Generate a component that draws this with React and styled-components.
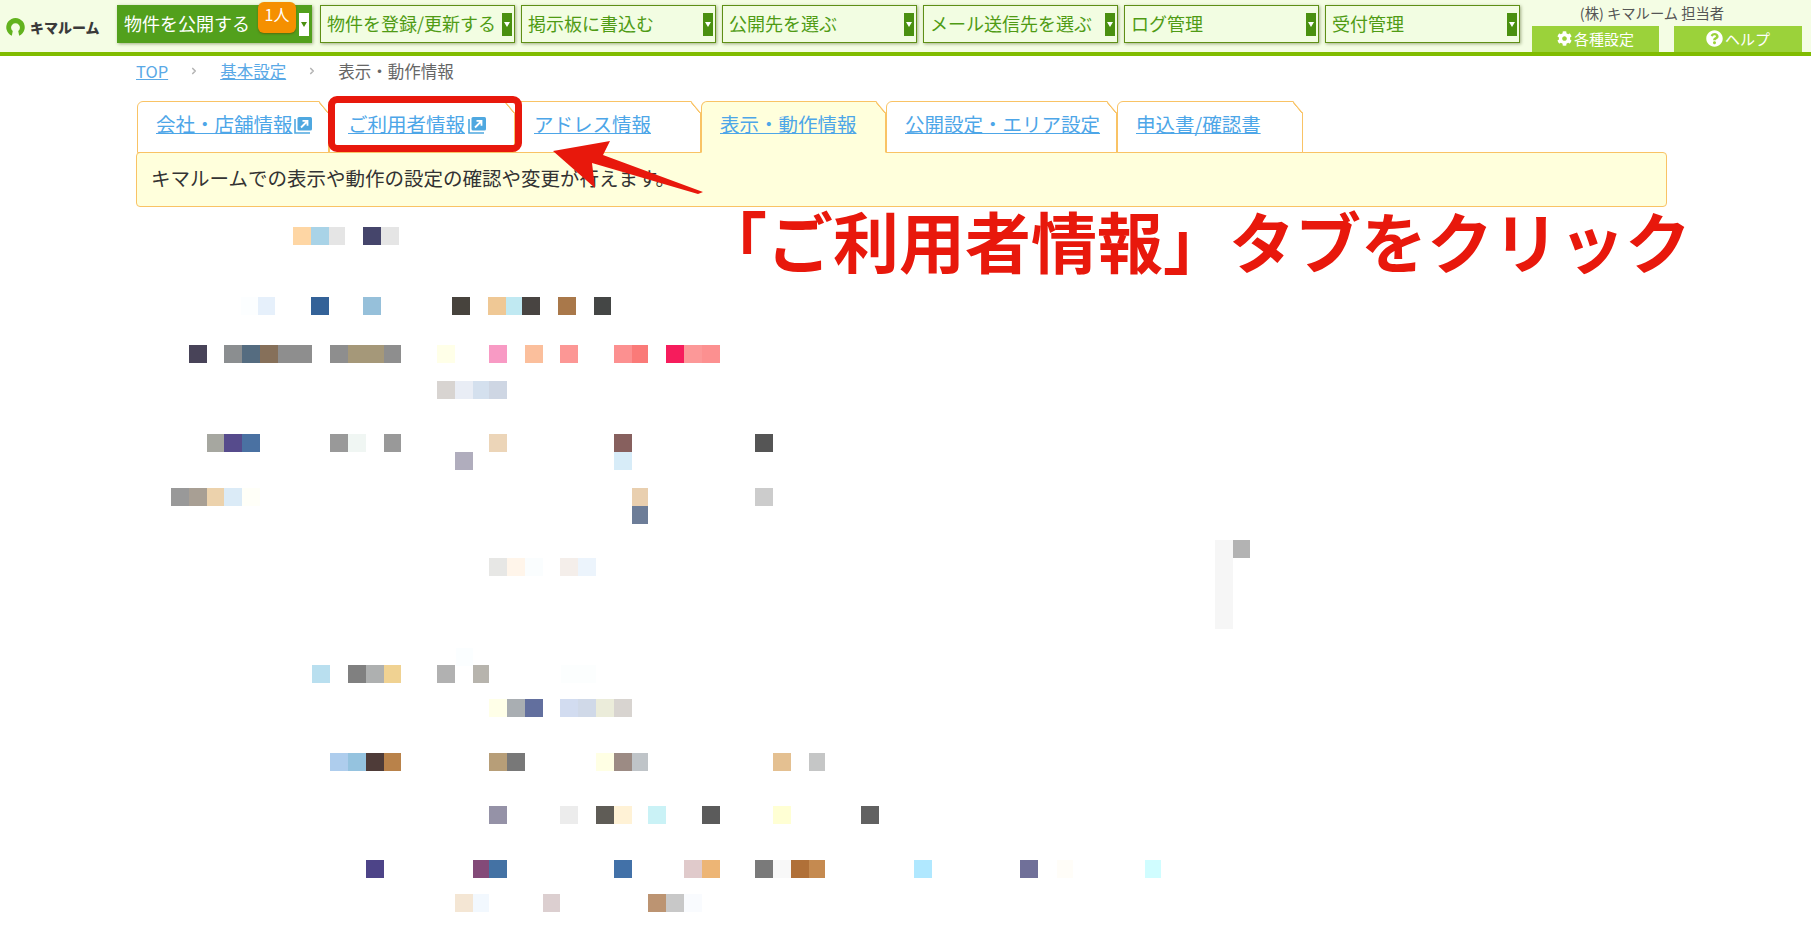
import styled, { createGlobalStyle } from 'styled-components';
import { ChevronRight } from 'lucide-react';
import { FaCog, FaQuestionCircle } from 'react-icons/fa';

const jp = `'Noto Sans CJK JP', 'Noto Sans', sans-serif`;
const red = '#e8180c';

const menus = ['物件を登録/更新する', '掲示板に書込む', '公開先を選ぶ', 'メール送信先を選ぶ', 'ログ管理', '受付管理'];

const tabs = [
  { label: '会社・店舗情報', width: 192, gap: 1, external: true },
  { label: 'ご利用者情報', width: 186, gap: 3, external: true },
  { label: 'アドレス情報', width: 186 },
  { label: '表示・動作情報', width: 185, active: true },
  { label: '公開設定・エリア設定', width: 231 },
  { label: '申込書/確認書', width: 186 },
];

// the blurred part of the page: [top, [left, right, colour], ...]
const mosaic = [
  [227, [293, 311, '#fed6a4'], [311, 329, '#a9d3e7'], [329, 345, '#e5e5e5'], [363, 381, '#45456b'], [381, 399, '#e5e5e5']],
  [297, [241, 258, '#fcfeff'], [258, 275, '#e6f0fb'], [311, 329, '#346298'], [363, 381, '#96c0da'], [452, 470, '#47433d'], [488, 506, '#efc895'], [506, 522, '#c0e9f2'], [522, 540, '#484441'], [558, 576, '#a9784a'], [594, 611, '#444645']],
  [345, [189, 207, '#484358'], [224, 242, '#8b8e90'], [242, 260, '#556c80'], [260, 278, '#86705a'], [278, 312, '#8e8e8e'], [330, 348, '#8e8e8e'], [348, 384, '#a59879'], [384, 401, '#8e8e8e'], [437, 455, '#ffffe8'], [489, 507, '#f89ac4'], [525, 543, '#fbbf9c'], [560, 578, '#fc9795'], [614, 632, '#fc9090'], [632, 648, '#fa7a78'], [666, 684, '#f61c5c'], [684, 702, '#fc9898'], [702, 720, '#fc9090']],
  [381, [437, 455, '#d8d4d1'], [455, 473, '#e9edf5'], [473, 489, '#d4e0ee'], [489, 507, '#ced6e3']],
  [434, [207, 224, '#a6a7a0'], [224, 242, '#564b8c'], [242, 260, '#4a71a2'], [330, 348, '#999999'], [348, 366, '#f0f6f3'], [384, 401, '#999999'], [489, 507, '#ecd5b8'], [614, 632, '#87605e'], [755, 773, '#555555']],
  [452, [455, 473, '#b0adbd'], [614, 632, '#d7ecf8']],
  [488, [171, 189, '#999999'], [189, 207, '#a89f94'], [207, 224, '#ecd2ac'], [224, 242, '#dbebf7'], [242, 260, '#fffff8'], [632, 648, '#e9cfaf'], [755, 773, '#cccccc']],
  [506, [632, 648, '#6d7d98']],
  [540, [1233, 1250, '#b3b3b3']],
  [558, [489, 507, '#e7e7e5'], [507, 525, '#fff5ea'], [525, 543, '#fafdfe'], [560, 578, '#f4eeea'], [578, 596, '#ecf4fc']],
  [648, [456, 473, '#fbfeff']],
  [665, [312, 330, '#b9dfef'], [348, 366, '#808080'], [366, 384, '#aeb0b0'], [384, 401, '#f0d292'], [437, 455, '#b1b1b1'], [473, 489, '#b7b4ad'], [561, 578, '#fcfefe'], [578, 596, '#fcfefe']],
  [699, [489, 507, '#ffffe8'], [507, 525, '#a9aeb2'], [525, 543, '#626f9e'], [560, 578, '#d2dcf0'], [578, 596, '#d0d9e8'], [596, 614, '#ebecda'], [614, 632, '#d8d4d0']],
  [753, [330, 348, '#aecded'], [348, 366, '#95c3df'], [366, 384, '#4e3b38'], [384, 401, '#b9824a'], [489, 507, '#b79e78'], [507, 525, '#787878'], [596, 614, '#ffffe4'], [614, 632, '#9c8b84'], [632, 648, '#bfc4c8'], [773, 791, '#e4c091'], [809, 825, '#c5c6c6']],
  [806, [489, 507, '#9592a7'], [560, 578, '#ececec'], [596, 614, '#5f5c56'], [614, 632, '#fff2d6'], [648, 666, '#caf2f6'], [702, 720, '#5b5b5b'], [773, 791, '#ffffd4'], [861, 879, '#616161']],
  [860, [366, 384, '#4d4488'], [473, 489, '#834a78'], [489, 507, '#4472a4'], [614, 632, '#4271a8'], [684, 702, '#e0cacb'], [702, 720, '#edb575'], [755, 773, '#7a7a7a'], [773, 791, '#f8f8f8'], [791, 809, '#b07038'], [809, 825, '#c58a50'], [914, 932, '#b0e8ff'], [1020, 1038, '#707099'], [1057, 1073, '#fffdf8'], [1145, 1161, '#d0fdff']],
  [894, [455, 473, '#f4e6d4'], [473, 489, '#f2f8fe'], [543, 560, '#dccfd0'], [648, 666, '#bc9472'], [666, 684, '#c8c8c8'], [684, 702, '#f9fbfe']],
];

const GlobalStyle = createGlobalStyle`
  html, body {
    margin: 0;
    height: 100%;
    overflow: hidden;
    background: #fff;
    font-family: ${jp};
  }
  * {
    box-sizing: border-box;
  }
`;

const Page = styled.div`
  position: relative;
  width: 1811px;
  height: 929px;
  overflow: hidden;
`;

const HeaderBar = styled.header`
  display: flex;
  height: 56px;
  background: #f4fde4;
  border-bottom: 4px solid #80bc00;
`;

const Logo = styled.div`
  display: flex;
  align-items: center;
  gap: 4px;
  width: 117px;
  padding: 1px 0 0 5px;
  flex-shrink: 0;
  font-size: 14px;
  font-weight: 900;
  color: #3a3a3a;
  white-space: nowrap;
`;

const MenuRow = styled.nav`
  display: flex;
  gap: 6px;
  padding-top: 5px;
`;

const MenuButton = styled.div`
  position: relative;
  display: flex;
  align-items: center;
  justify-content: space-between;
  width: 195px;
  height: 38px;
  margin-right: ${props => (props.$active ? '2px' : '0')};
  padding: 0 2px 2px 6px;
  font-size: 18px;
  color: ${props => (props.$active ? '#fff' : '#4f9b14')};
  background: ${props => (props.$active ? '#52a01c' : '#f2fde2')};
  border: 1px solid ${props => (props.$active ? '#52a01c' : '#5f8f16')};
  box-shadow: 1px 1px 3px rgba(60, 80, 20, 0.45);
  white-space: nowrap;
`;

const Handle = styled.span`
  display: flex;
  align-items: center;
  justify-content: center;
  width: 10px;
  height: 23px;
  margin-top: 2px;
  background: ${props => (props.$active ? '#fff' : '#4a9010')};

  &::after {
    content: '';
    border-style: solid;
    border-width: 5px 3px 0;
    border-color: ${props => (props.$active ? '#4a9010' : '#fff')} transparent transparent;
  }
`;

const Badge = styled.span`
  position: absolute;
  top: -4px;
  left: 140px;
  width: 38px;
  height: 31px;
  padding-top: 1px;
  font-size: 16px;
  line-height: 22px;
  text-align: center;
  color: #fff;
  background: #f59000;
  border-radius: 6px;
  box-shadow: 0 1px 2px rgba(90, 60, 0, 0.5);
`;

const UserBlock = styled.div`
  display: flex;
  flex-direction: column;
  justify-content: flex-end;
  margin-left: 12px;
  width: 270px;
`;

const UserName = styled.div`
  padding-right: 30px;
  font-size: 14.3px;
  line-height: 26px;
  text-align: center;
  color: #555;
  white-space: nowrap;
`;

const UtilityRow = styled.div`
  display: flex;
  justify-content: space-between;
`;

const UtilityButton = styled.div`
  display: flex;
  align-items: center;
  justify-content: center;
  gap: 2px;
  width: ${props => props.$width}px;
  height: 26px;
  padding-bottom: 2px;
  font-size: 15px;
  color: #fff;
  background: #9bd23a;
`;

const Content = styled.main`
  padding-left: 136px;
  width: 1667px;
`;

const Breadcrumb = styled.div`
  display: flex;
  align-items: center;
  height: 30px;
  margin-bottom: 15px;
  font-size: 16.5px;
  color: #666;
`;

const Crumb = styled.a`
  color: #5aa9e6;
  text-decoration: underline;
`;

const CrumbArrow = styled(ChevronRight)`
  width: 10px;
  height: 10px;
  margin: 0 21px;
  color: #b5b5b5;
`;

const TabRow = styled.div`
  display: flex;
  position: relative;
  z-index: 1;
  margin-bottom: -1px;
  padding-left: 1px;
`;

const Tab = styled.div`
  position: relative;
  display: flex;
  align-items: flex-start;
  gap: ${props => props.$gap || 0}px;
  width: ${props => props.$width}px;
  height: 52px;
  padding: 10px 0 0 18px;
  font-size: 19.5px;
  line-height: 24px;
  white-space: nowrap;
  background: ${props => (props.$active ? '#ffffdc' : '#fff')};
  border: 1px solid #f9c365;
  border-bottom-color: ${props => (props.$active ? '#ffffdc' : '#f9c365')};
  border-radius: 6px 0 0 0;
  clip-path: polygon(0 0, calc(100% - 10px) 0, 100% 12px, 100% 100%, 0 100%);

  &::after {
    content: '';
    position: absolute;
    top: -1px;
    right: -1px;
    width: 10px;
    height: 12px;
    background: linear-gradient(
      to top right,
      transparent calc(50% - 1.5px),
      #f9c365 calc(50% - 1px),
      #f9c365 calc(50% + 1px),
      transparent calc(50% + 1.5px)
    );
  }
`;

const TabLink = styled.a`
  color: #4da6e8;
  text-decoration: underline;
`;

const TabIcon = styled.svg`
  margin-top: 5px;
`;

const ExternalIcon = () => (
  <TabIcon width="18" height="17" viewBox="0 0 18 17">
    <path d="M1 2v14h15" fill="none" stroke="#4fa8e0" strokeWidth="1.6" />
    <rect x="3.5" y="0" width="14.5" height="13.5" rx="1.5" fill="#4fa8e0" />
    <path d="M7 10.5l6-6M8.5 3.8h5v5" fill="none" stroke="#fff" strokeWidth="1.8" />
  </TabIcon>
);

const InfoPanel = styled.div`
  height: 55px;
  padding-left: 14px;
  font-size: 19.5px;
  line-height: 50px;
  color: #333;
  background: #ffffdc;
  border: 1px solid #f9c365;
  border-radius: 4px;
  white-space: nowrap;
`;

const Mosaic = styled.svg`
  display: block;
  shape-rendering: crispEdges;
`;

const RedFrame = styled.div`
  position: absolute;
  z-index: 2;
  top: 96px;
  left: 328px;
  width: 194px;
  height: 56px;
  border: 7px solid ${red};
  border-radius: 9px;
`;

const ArrowMark = styled.svg`
  position: absolute;
  z-index: 2;
  top: 130px;
  left: 540px;
`;

const Callout = styled.div`
  position: absolute;
  z-index: 2;
  top: 191px;
  left: 701px;
  font-size: 66px;
  font-weight: 700;
  line-height: 96px;
  color: ${red};
  text-shadow: 0 0 3px #fff;
  white-space: nowrap;
`;

const LogoMark = () => (
  <svg width="21" height="21" viewBox="0 0 20 20">
    <path d="M6.5 18.8A8.8 8.8 0 1 1 13.5 18.8L12.6 14.4A4.2 4.2 0 1 0 7.4 14.4Z" fill="#62b31e" />
  </svg>
);

export default function App() {
  return (
    <Page>
      <GlobalStyle />
      <HeaderBar>
        <Logo>
          <LogoMark />
          キマルーム
        </Logo>
        <MenuRow>
          <MenuButton $active>
            物件を公開する
            <Badge>1人</Badge>
            <Handle $active />
          </MenuButton>
          {menus.map(label => (
            <MenuButton key={label}>
              {label}
              <Handle />
            </MenuButton>
          ))}
        </MenuRow>
        <UserBlock>
          <UserName>(株) キマルーム 担当者</UserName>
          <UtilityRow>
            <UtilityButton $width={127}>
              <FaCog size={15} />
              各種設定
            </UtilityButton>
            <UtilityButton $width={128}>
              <FaQuestionCircle size={17} />
              ヘルプ
            </UtilityButton>
          </UtilityRow>
        </UserBlock>
      </HeaderBar>

      <Content>
        <Breadcrumb>
          <Crumb>TOP</Crumb>
          <CrumbArrow strokeWidth={4} />
          <Crumb>基本設定</Crumb>
          <CrumbArrow strokeWidth={4} />
          表示・動作情報
        </Breadcrumb>
        <TabRow>
          {tabs.map(tab => (
            <Tab key={tab.label} $width={tab.width} $gap={tab.gap} $active={tab.active}>
              <TabLink>{tab.label}</TabLink>
              {tab.external && <ExternalIcon />}
            </Tab>
          ))}
        </TabRow>
        <InfoPanel>キマルームでの表示や動作の設定の確認や変更が行えます。</InfoPanel>
      </Content>

      <Mosaic width="1811" height="722" viewBox="0 207 1811 722">
        <rect x="1215" y="540" width="18" height="89" fill="#f6f6f6" />
        {mosaic.map(([top, ...cells]) =>
          cells.map(([left, right, colour]) => (
            <rect key={`${top}-${left}`} x={left} y={top} width={right - left} height="18" fill={colour} />
          )),
        )}
      </Mosaic>

      <RedFrame />
      <ArrowMark width="170" height="70" viewBox="540 130 170 70">
        <polygon points="553,151 610,141 603,155 703,192 698,194 592,163 595,188" fill={red} />
      </ArrowMark>
      <Callout>「ご利用者情報」タブをクリック</Callout>
    </Page>
  );
}
